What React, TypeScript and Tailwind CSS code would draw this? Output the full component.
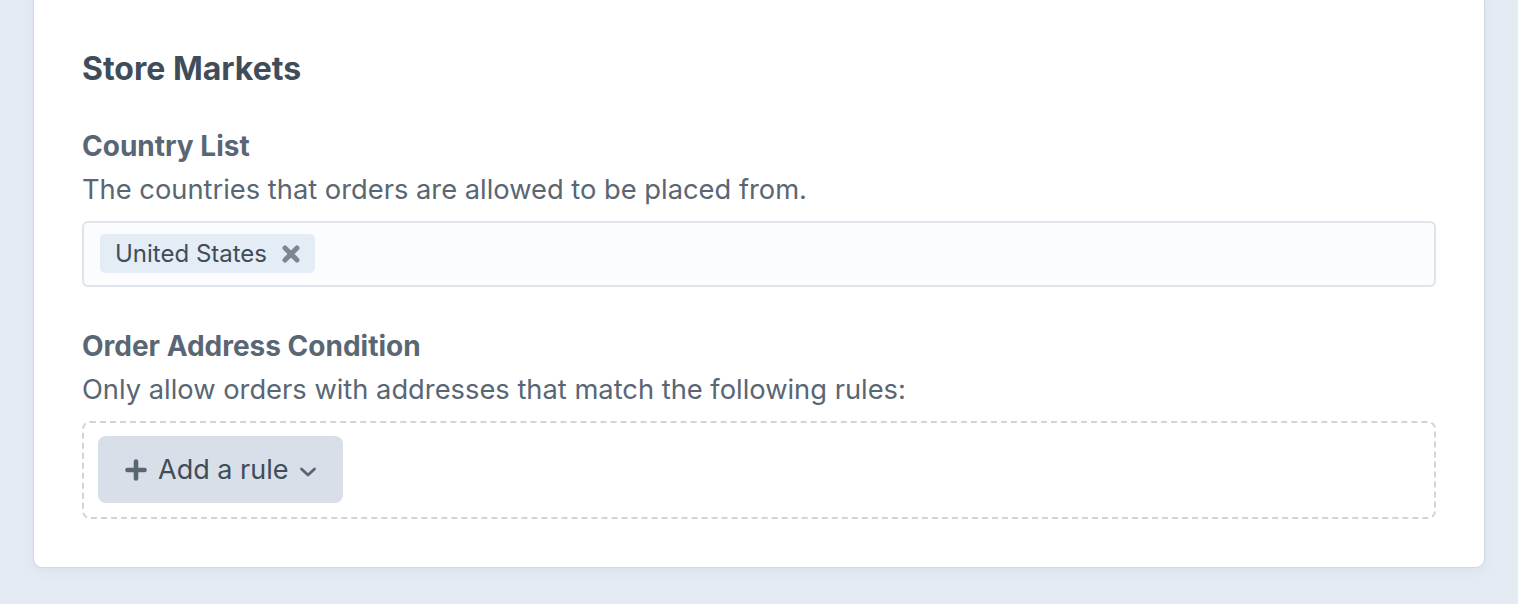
export default function App() {
    const font = { fontFamily: '"Inter", "Noto Sans", sans-serif' }

    return (
        <div className="min-h-[604px] w-full bg-[#e4ebf3] px-[33px] pb-[36px]" style={font}>
            <div className="flex flex-col rounded-b-[9px] border-x border-b border-[#cdd8e4] bg-white px-[48px] pb-[48px] pt-[52px] shadow-[0_2px_10px_rgba(205,216,228,0.5)]">

                <h2 className="text-[32px] leading-[34px] font-bold text-[#3f4d5a]">Store Markets</h2>

                {/* country list */}
                <p className="mt-[44px] text-[28px] leading-[32px] font-bold text-[#596673]">Country List</p>
                <p className="mt-[12px] text-[27.3px] leading-[32px] text-[#596673]">The countries that orders are allowed to be placed from.</p>
                <div className="mt-[15px] flex h-[66px] items-start rounded-[6px] border-2 border-[#dde4eb] bg-[#fbfcfe] pl-[16px] pt-[11px]">
                    <div className="flex h-[39px] items-center gap-[14px] rounded-[5px] bg-[#e4ecf5] pl-[15px] pr-[14px]">
                        <span className="text-[24px] leading-none text-[#3f4d5a]">United States</span>
                        <svg width="20" height="20" viewBox="0 0 20 20" className="text-[#7b8793]">
                            <path d="M4 4 L16 16 M16 4 L4 16" stroke="currentColor" strokeWidth="5" strokeLinecap="round" />
                        </svg>
                    </div>
                </div>

                {/* address condition */}
                <p className="mt-[43px] text-[28px] leading-[32px] font-bold text-[#596673]">Order Address Condition</p>
                <p className="mt-[12px] text-[27.3px] leading-[32px] text-[#596673]">Only allow orders with addresses that match the following rules:</p>
                <div className="mt-[15px] flex h-[98px] items-start rounded-[8px] border-2 border-dashed border-[#d0d5db] pl-[14px] pt-[13px]">
                    <button className="flex h-[67px] w-[245px] items-center rounded-[8px] bg-[#d8dfe8] pl-[27px] text-[#3f4d5a]">
                        <svg width="22" height="22" viewBox="0 0 22 22" className="text-[#596673]">
                            <path d="M11 2.5 V19.5 M2.5 11 H19.5" stroke="currentColor" strokeWidth="4.6" strokeLinecap="round" />
                        </svg>
                        <span className="ml-[11px] text-[27px] leading-none">Add a rule</span>
                        <svg width="18" height="12" viewBox="0 0 18 12" className="ml-[11px] mt-[4px] text-[#596673]">
                            <path d="M2.5 3 L9 9 L15.5 3" fill="none" stroke="currentColor" strokeWidth="2.8" strokeLinecap="round" strokeLinejoin="round" />
                        </svg>
                    </button>
                </div>
            </div>
        </div>
    )
}
